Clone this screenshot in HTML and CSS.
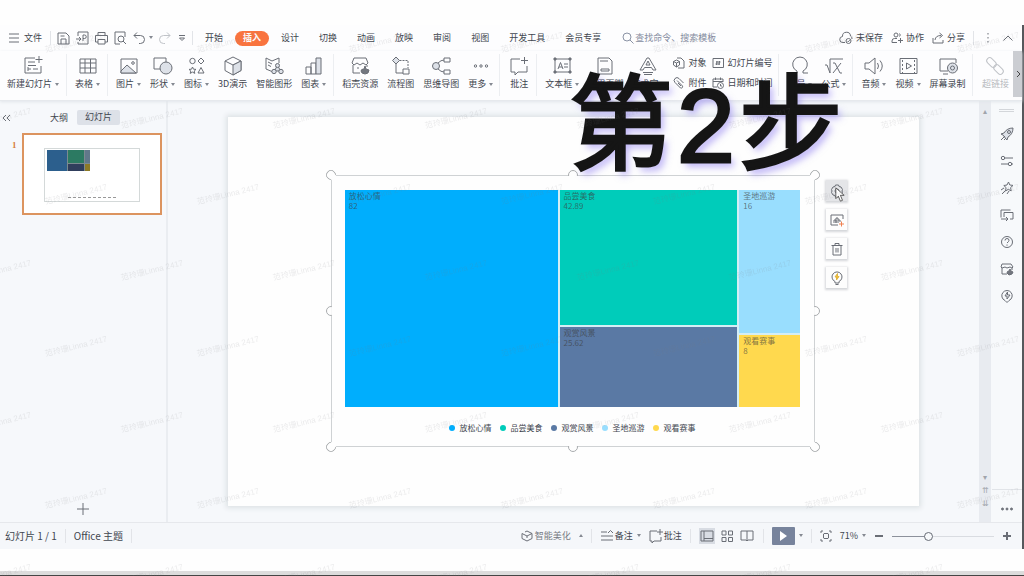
FILE: index.html
```html
<!DOCTYPE html>
<html lang="zh-CN">
<head>
<meta charset="utf-8">
<meta name="viewport" content="width=device-width, initial-scale=1">
<title>幻灯片</title>
<link rel="stylesheet" href="styles.css">
</head>
<body>
<div class="app">
  <header class="menubar">
    <div class="menu-left">
      <button class="item file"><svg class="ic s12" viewBox="0 0 12 12"><path d="M1 2h10M1 6h10M1 10h10"/></svg>文件</button>
      <i class="sep"></i>
      <div class="quick">
        <button class="item" aria-label="保存"><svg class="ic s14" viewBox="0 0 14 14"><path d="M2 2h8l3 3v8H2zM5 13V8h5v5M4.500 5h4"/></svg></button>
        <button class="item" aria-label="输出为PDF"><svg class="ic s14" viewBox="0 0 14 14"><path d="M3 5V1h10v12H3v-2M1 8h5M4 6l2 2-2 2M8 10V4h1.500a1.700 1.700 0 0 1 0 3.500H8"/></svg></button>
        <button class="item" aria-label="打印"><svg class="ic s14" viewBox="0 0 14 14"><path d="M4 4V1.500h7V4M4 11H1.500V4.500h12V11H11M4 8.500h7v4.500H4z"/></svg></button>
        <button class="item" aria-label="打印预览"><svg class="ic s14" viewBox="0 0 14 14"><path d="M7 13H2V1h10v5"/><circle cx="8" cy="8" r="3"/><path d="m10 10 3 3"/></svg></button>
        <button class="item" aria-label="撤销"><svg class="ic s14" viewBox="0 0 14 14"><path d="M5 1.500 2 4.500l3 3M2 4.500h6.500a4 4 0 0 1 0 8H7"/></svg><i class="caret"></i></button>
        <button class="item faint" aria-label="恢复"><svg class="ic s14" viewBox="0 0 14 14"><path d="m9 1.500 3 3-3 3M12 4.500H5.500a4 4 0 0 0 0 8H7"/></svg></button>
        <button class="item" aria-label="自定义"><svg class="ic s10" viewBox="0 0 10 10"><path d="M2 2.500h6M2.500 5h5L5 7.500z"/></svg></button>
      </div>
      <i class="sep"></i>
    </div>
    <nav class="tabs">
      <button>开始</button><button class="active">插入</button><button>设计</button><button>切换</button><button>动画</button><button>放映</button><button>审阅</button><button>视图</button><button>开发工具</button><button>会员专享</button>
    </nav>
    <label class="search"><svg class="ic s12" viewBox="0 0 12 12"><circle cx="5" cy="5" r="4"/><path d="m8 8 3.500 3.500"/></svg><input type="text" placeholder="查找命令、搜索模板" aria-label="查找命令、搜索模板"></label>
    <div class="menu-right">
      <button class="item"><svg class="ic s14" viewBox="0 0 14 14"><path d="M6 11.500H4A3 3 0 0 1 3.500 5.500a4 4 0 0 1 8-.5 3 3 0 0 1 1.500 3"/><circle cx="9.500" cy="10" r="2.500"/><path d="m8.500 10 .8.8 1.400-1.600"/></svg>未保存</button>
      <button class="item"><svg class="ic s12" viewBox="0 0 12 12"><circle cx="5" cy="3" r="2"/><path d="M1 10.500V9a2.500 2.500 0 0 1 2.500-2.500H6M1 10.500h5M9.500 6v5M7 8.500h5M8.500 1.500q1.500 1.500 0 3"/></svg>协作</button>
      <button class="item"><svg class="ic s12" viewBox="0 0 12 12"><path d="M1 6v5h10V8M3 8q.5-4.500 6-4.500M7.500 1l3 2.500-3 2.500"/></svg>分享</button>
      <i class="sep"></i>
      <button class="item" aria-label="更多"><svg class="ic s12" viewBox="0 0 12 12"><path class="fill" d="M5.500 1h1v1.500h-1zM5.500 5h1v1.500h-1zM5.500 9h1v1.500h-1z"/></svg></button>
      <button class="item" aria-label="收起"><svg class="ic s12" viewBox="0 0 12 12"><path d="M1.500 8.500 6 4l4.500 4.500"/></svg></button>
    </div>
  </header>

  <div class="ribbon">
    <div class="group wide">
      <button class="tool"><svg class="ic s22" viewBox="0 0 22 22"><path d="M13 3H3v15h16v-7M6 7h7M6 10.500h8M6 14h3M11 14h5M6 12v4M17 1v7M13.500 4.500h7"/></svg><span>新建幻灯片<i class="caret"></i></span></button>
    </div>
    <div class="group wide">
      <button class="tool"><svg class="ic s22" viewBox="0 0 22 22"><path d="M3 4h16v14H3zM3 8h16M3 13h16M8 4v14M13.500 4v14"/></svg><span>表格<i class="caret"></i></span></button>
    </div>
    <div class="group wide">
      <button class="tool"><svg class="ic s22" viewBox="0 0 22 22"><path d="M3 4h16v14H3z"/><path class="shade" d="m3 16 6-6 9 8H3z"/><circle cx="15" cy="8" r="1.300"/></svg><span>图片<i class="caret"></i></span></button>
      <button class="tool"><svg class="ic s22" viewBox="0 0 22 22"><path d="M2 3h12v11H2z"/><circle class="shade" cx="14" cy="13" r="6"/></svg><span>形状<i class="caret"></i></span></button>
      <button class="tool"><svg class="ic s22" viewBox="0 0 22 22"><circle cx="6.500" cy="6" r="2.700"/><path d="m15 3 3 3-3 3-3-3zM15 12.500l3 5.500h-6zM6.500 12l1 2.200 2.500.2-1.800 1.600.6 2.400-2.300-1.300-2.300 1.300.6-2.400L3 14.400l2.500-.2z"/></svg><span>图标<i class="caret"></i></span></button>
      <button class="tool"><svg class="ic s22" viewBox="0 0 22 22"><path d="m11 2 8 4v9.500L11 20l-8-4.500V6zM3 6l8 4 8-4"/><path class="shade" d="m11 10 8-4v9.500L11 20z"/></svg><span>3D演示</span></button>
      <button class="tool"><svg class="ic s22" viewBox="0 0 22 22"><path d="M10 17 3 14V3l6 3 7-3v5M5 7l4 2M5 10l3 1.500"/><path class="shade" d="m14.500 10-3 6h6z"/><circle class="shade" cx="14.500" cy="10.500" r="2"/><circle class="shade" cx="11" cy="16.500" r="2.200"/><circle class="shade" cx="18" cy="16.500" r="2.200"/></svg><span>智能图形</span></button>
      <button class="tool"><svg class="ic s22" viewBox="0 0 22 22"><path d="M3 12h5v7H3zM8 8h5v11H8z"/><path class="shade" d="M13 3h5v16h-5z"/></svg><span>图表<i class="caret"></i></span></button>
    </div>
    <div class="group">
      <button class="tool"><svg class="ic s22" viewBox="0 0 22 22"><path d="M4 10v8h7M5 3h12l2 5-2 2-3-2-3 2-3-2-3 2-2-2zM18 10v2M8 13h2"/><path class="dark" d="M12 16q0-2 3-2l1-3 1 3 3 1-1 3-3 1-3-1z"/></svg><span>稻壳资源</span></button>
      <button class="tool"><svg class="ic s22" viewBox="0 0 22 22"><path class="shade" d="m6 2 3.500 3.500L6 9 2.500 5.500z"/><path d="M6 9v9h7"/><path stroke-dasharray="2 1" d="M9.500 5.500H18V13"/><path d="M13 14h6v5h-6z"/></svg><span>流程图</span></button>
      <button class="tool"><svg class="ic s22" viewBox="0 0 22 22"><circle class="shade" cx="6" cy="11" r="3.500"/><path d="M8 8q3-3 6-3M8 14q3 3 6 3M14 3h6v4h-6zM14 15h6v4h-6z"/></svg><span>思维导图</span></button>
      <button class="tool"><svg class="ic s22" viewBox="0 0 22 22"><circle cx="5.500" cy="11" r="1.200"/><circle cx="11" cy="11" r="1.200"/><circle cx="16.500" cy="11" r="1.200"/></svg><span>更多<i class="caret"></i></span></button>
    </div>
    <div class="group">
      <button class="tool"><svg class="ic s22" viewBox="0 0 22 22"><path d="M12 4H3v13h4v3l3-3h9v-6M16.500 2v7M13 5.500h7"/></svg><span>批注</span></button>
    </div>
    <div class="group tight">
      <button class="tool"><svg class="ic s22" viewBox="0 0 22 22"><path d="M4 4h15v13H4zM7 14l2.500-6.500L12 14M8 12h3M13 9h4M13 12h4"/><path class="dark" d="M3 3h2v2H3zM18 3h2v2h-2zM3 16h2v2H3zM18 16h2v2h-2z"/></svg><span>文本框<i class="caret"></i></span></button>
      <button class="tool"><svg class="ic s22" viewBox="0 0 22 22"><path d="M4 3h11l3 3v13H4zM6 6h8M7 14h8v2H7z"/></svg><span>页眉页脚</span></button>
      <button class="tool"><svg class="ic s22" viewBox="0 0 22 22"><path d="m3 15 7-12h2l7 12h-3l-1.500-2.500h-7L6 15zM9 10l2-4 2 4zM6 17.500h10M7 19.500h8"/></svg><span>艺术字<i class="caret"></i></span></button>
      <div class="stack">
        <button class="item"><svg class="ic s12" viewBox="0 0 12 12"><path d="M4 1h4l3 3v7H5"/><path d="m3.500 3 3 1.500V8l-3 2-3-2V4.500zM.5 4.500l3 1.500 3-1.500M3.500 6v4"/></svg>对象</button>
        <button class="item"><svg class="ic s12" viewBox="0 0 12 12"><path d="M4 3.500 9.500 9A1.500 1.500 0 0 1 7.500 11L2 5.500A2.800 2.800 0 0 1 6 1.500L10.500 6M5 6l3 3"/></svg>附件</button>
      </div>
      <div class="stack">
        <button class="item"><svg class="ic s12" viewBox="0 0 12 12"><path d="M1 1.500h10.500v9H1zM5 4 4.500 8M7.500 4 7 8M4 5h4.500M3.500 7H8"/></svg>幻灯片编号</button>
        <button class="item"><svg class="ic s12" viewBox="0 0 12 12"><path d="M5 10H1V2h10v3M1 4.500h10M3.500.5V3M8.500.5V3"/><circle cx="8.500" cy="8.500" r="3"/><path d="M8.500 7v2H10"/></svg>日期和时间</button>
      </div>
    </div>
    <div class="group">
      <button class="tool"><svg class="ic s22" viewBox="0 0 22 22"><path d="M3 18h5v-2a7.300 7.300 0 1 1 6 0v2h5"/></svg><span>符号<i class="caret"></i></span></button>
      <button class="tool"><svg class="ic s22" viewBox="0 0 22 22"><path d="M2 10h2l3 8V4h13M10 8h2l5 10h2M18 8l-8 10"/></svg><span>公式<i class="caret"></i></span></button>
    </div>
    <div class="group">
      <button class="tool"><svg class="ic s22" viewBox="0 0 22 22"><path d="M2 8h4l6-5v16l-6-5H2zM14.500 8q2 3 0 6M17 5.500q4.500 5.500 0 11"/></svg><span>音频<i class="caret"></i></span></button>
      <button class="tool"><svg class="ic s22" viewBox="0 0 22 22"><path d="M3 3.500h17v15H3zM9.500 8v6l5-3z"/><path stroke-dasharray="2 2" d="M5.500 5v13M17.500 5v13"/></svg><span>视频<i class="caret"></i></span></button>
      <button class="tool"><svg class="ic s22" viewBox="0 0 22 22"><path d="M11 16H3V4h16v4M6 19h5"/><circle class="shade" cx="15.500" cy="13" r="5"/><circle cx="15.500" cy="13" r="2"/></svg><span>屏幕录制</span></button>
    </div>
    <div class="group last">
      <button class="tool faint"><svg class="ic s22" viewBox="0 0 22 22"><rect x="2" y="4.500" width="11" height="6" rx="3" transform="rotate(45 7.500 7.500)"/><rect x="9" y="11.500" width="11" height="6" rx="3" transform="rotate(45 14.500 14.500)"/></svg><span>超链接</span></button>
    </div>
    <button class="more" aria-label="向右滚动"><svg class="ic s10" viewBox="0 0 10 10"><path d="m4 2 3 3-3 3"/></svg></button>
  </div>

  <main class="work">
    <aside class="outline">
      <div class="outline-tabs">
        <button class="item" aria-label="收起"><svg class="ic s10" viewBox="0 0 10 10"><path d="M4 2 1 5l3 3M8 2 5 5l3 3"/></svg></button>
        <button class="pane-tab">大纲</button>
        <button class="pane-tab active">幻灯片</button>
      </div>
      <div class="slide-row">
        <b>1</b>
        <div class="thumb">
          <div class="mini">
            <div class="mini-map"><i class="m1"></i><i class="m2"></i><i class="m3"></i><i class="m4"></i><i class="m5"></i></div>
            <div class="mini-legend"></div>
          </div>
        </div>
      </div>
      <button class="add" aria-label="新建幻灯片"><svg class="ic s12" viewBox="0 0 12 12"><path d="M6 0v12M0 6h12"/></svg></button>
    </aside>

    <section class="canvas">
      <div class="slide">
        <div class="chart">
          <div class="treemap">
            <div class="col"><div class="cell blue">放松心情<br>82</div></div>
            <div class="col two"><div class="cell green">品尝美食<br>42.89</div><div class="cell slate">观赏风景<br>25.62</div></div>
            <div class="col three"><div class="cell sky">圣地巡游<br>16</div><div class="cell yellow">观看赛事<br>8</div></div>
          </div>
          <ul class="legend">
            <li><i class="blue"></i>放松心情</li><li><i class="green"></i>品尝美食</li><li><i class="slate"></i>观赏风景</li><li><i class="sky"></i>圣地巡游</li><li><i class="yellow"></i>观看赛事</li>
          </ul>
          <i class="handle tl"></i><i class="handle tr"></i><i class="handle bl"></i><i class="handle br"></i>
          <i class="handle t"></i><i class="handle b"></i><i class="handle l"></i><i class="handle r"></i>
          <div class="float-tools">
            <button class="hover" aria-label="图表设置"><svg class="ic s14" viewBox="0 0 14 14"><path d="m5.500 1 3 0 .5 1.500L11 3l1.500 2.500L12 7l.5 1.500L11 11l-2 .5-.5 1.500h-3L5 11.500 3 11 1.500 8.500 2 7l-.5-1.500L3 3l2-.5z"/><circle cx="7" cy="7" r="2"/></svg>
              <svg class="pointer" viewBox="0 0 12 18"><path d="M1 1v13l3-3 2.500 6 2.500-1-2.500-6H11z"/></svg></button>
            <button aria-label="图表元素"><svg class="ic s14" viewBox="0 0 14 14"><path d="M8 12H1V2h12v4M4 10V7h2v3M6 10V5h2v5M8 7h2v2"/><path class="orange" d="M11.500 8.500v5M9 11h5"/></svg></button>
            <button aria-label="删除"><svg class="ic s14" viewBox="0 0 14 14"><path d="M1.500 3.500h11M5 3V1.500h4V3M3 3.500V13h8V3.500M6 6v4.500M8 6v4.500"/></svg></button>
            <button aria-label="智能提示"><svg class="ic s14" viewBox="0 0 14 14"><path d="M5 10.500a5 5 0 1 1 4 0V12H5zM5.500 13.500h3"/><path class="spark" d="m7.500 2.500-2.500 3.500h1.500L6.500 9 9 5.500H7.500z"/></svg></button>
          </div>
        </div>
      </div>
    </section>

    <div class="scrollbar"><span>▴</span><div><span>▾</span><span>⇈</span><span>⇊</span></div></div>

    <aside class="sidebar">
      <i class="grip"></i>
      <button aria-label="新功能"><svg class="ic s14" viewBox="0 0 14 14"><path class="shade" d="M13 1Q7 1 4 6L1 7l2 1 3 4 1 1 1-3q5-3 5-9z"/><circle cx="9" cy="5" r="1.500"/><path d="m1 13 4-4M4 13l2-2"/></svg></button>
      <button aria-label="对象属性"><svg class="ic s14" viewBox="0 0 14 14"><circle cx="3" cy="4" r="1.700"/><path d="M5 4h8M1 10h7M12 10h1"/><circle cx="10" cy="10" r="1.700"/></svg></button>
      <button aria-label="动画"><svg class="ic s14" viewBox="0 0 14 14"><path d="m8.500 1 1.300 3 3.200.4-2.400 2.200.6 3.300-2.900-1.600L5.500 10l.6-3.400L3.800 4.500 7 4zM4 7l-3 2M5 10l-3 3M9 10l-2 3"/></svg></button>
      <button aria-label="切换"><svg class="ic s14" viewBox="0 0 14 14"><path d="M1 9.500V2h9.500M4 9V4.500h9V11h-3M1 11h7M6 9l2 2-2 2"/></svg></button>
      <button aria-label="帮助"><svg class="ic s14" viewBox="0 0 14 14"><circle cx="7" cy="7" r="5.500"/><path d="M5 5.500q0-2 2-2t2 1.800Q9 6.500 7 8M7 9.500v1.200"/></svg></button>
      <button aria-label="稻壳资源"><svg class="ic s14" viewBox="0 0 14 14"><path d="M2 6v6h5M2 2h9l2 3-1 1-2-1-3 1-2-1-3 1-1-1zM12 6v2"/><path class="dark" d="M7 11q0-2 2-2l1-2 1 2 2 1-1 2-3 1z"/></svg></button>
      <button aria-label="智能助手"><svg class="ic s14" viewBox="0 0 14 14"><path d="M5 11.500a5.200 5.200 0 1 1 4 0L7 13.500zM7.500 3 5 7h2v3l3-4H7.500z"/></svg></button>
      <button class="dots" aria-label="更多"><svg class="ic s14" viewBox="0 0 14 14"><circle class="dark" cx="2.500" cy="7" r="1"/><circle class="dark" cx="7" cy="7" r="1"/><circle class="dark" cx="11.500" cy="7" r="1"/></svg></button>
    </aside>
  </main>

  <footer class="status">
    <span class="note">幻灯片 1 / 1</span><i class="sep"></i><span class="note">Office 主题</span><i class="sep"></i>
    <div class="status-right">
      <button class="item soft"><svg class="ic s12" viewBox="0 0 12 12"><path d="m4 2 2-1 5 2.500v5L6 11 1 8.500V3.500L6 6l5-2.500M6 6v2"/></svg>智能美化<i class="caret up"></i></button>
      <i class="sep"></i>
      <button class="item"><svg class="ic s14" viewBox="0 0 14 14"><path d="M1 3h6M1 7h12M1 11h12M8 4l2.500-2.500L13 4"/></svg>备注<i class="caret"></i></button>
      <button class="item"><svg class="ic s14" viewBox="0 0 14 14"><path d="M8 2H1v10h2v2l2-2h7V8M11 0v6M8 3h6"/></svg>批注</button>
      <i class="sep"></i>
      <button class="item view on" aria-label="普通视图"><svg class="ic s14" viewBox="0 0 14 14"><path d="M1 2h12v10H1zM4 2v10M4 9.500h9"/></svg></button>
      <button class="item view" aria-label="幻灯片浏览"><svg class="ic s14" viewBox="0 0 14 14"><path d="M2 2h4v4H2zM8.500 2h4v4h-4zM2 8.500h4v4H2zM8.500 8.500h4v4h-4z"/></svg></button>
      <button class="item view" aria-label="阅读视图"><svg class="ic s14" viewBox="0 0 14 14"><path d="M1 2h12v9H8l-1 1-1-1H1zM7 2v9"/></svg></button>
      <i class="sep"></i>
      <button class="play" aria-label="放映"><svg viewBox="0 0 10 10"><path d="M2 0v10l7-5z"/></svg></button><i class="caret after-play"></i>
      <i class="sep"></i>
      <button class="item" aria-label="适应窗口"><svg class="ic s12" viewBox="0 0 12 12"><path d="M1 3V1h2M9 1h2v2M11 9v2H9M3 11H1V9M4 3.500h4l.5.5v4l-.5.5H4L3.500 8V4z"/></svg></button>
      <button class="item">71%<i class="caret"></i></button>
      <button class="item zoom" aria-label="缩小"><svg class="ic s10" viewBox="0 0 10 10"><path d="M1 5h8"/></svg></button>
      <input class="slider" type="range" min="0" max="100" value="34" aria-label="缩放">
      <button class="item zoom" aria-label="放大"><svg class="ic s10" viewBox="0 0 10 10"><path d="M1 5h8M5 1v8"/></svg></button>
    </div>
  </footer>
</div>
<div class="bottom-strip"></div>
<div class="caption">第<span>2</span>步</div>
<svg class="watermark" aria-hidden="true">
  <defs>
    <pattern id="wm" width="152" height="152" patternUnits="userSpaceOnUse">
      <g text-anchor="middle">
        <text x="76" y="45" transform="rotate(-14 76 42)">范玲珊Linna 2417</text>
        <text x="0" y="121" transform="rotate(-14 0 118)">范玲珊Linna 2417</text>
        <text x="152" y="121" transform="rotate(-14 152 118)">范玲珊Linna 2417</text>
      </g>
    </pattern>
  </defs>
  <rect width="100%" height="100%" fill="url(#wm)"/>
</svg>
</body>
</html>
```
FILE: styles.css
```css
* { box-sizing: border-box; }
body {
  margin: 0;
  min-height: 100vh;
  display: flex;
  flex-direction: column;
  position: relative;
  overflow: hidden;
  background: #fefefe;
  color: #41464f;
  font: 9px/12px "Noto Sans CJK SC", sans-serif;
}
button { border: 0; padding: 0; background: none; color: inherit; font: inherit; white-space: nowrap; }
i { font-style: normal; }

.ic { display: block; flex: none; fill: none; stroke: #6a6e76; stroke-width: 1; overflow: visible; }
.s10 { width: 10px; height: 10px; }
.s12 { width: 12px; height: 12px; }
.s14 { width: 14px; height: 14px; }
.s22 { width: 22px; height: 22px; }
.ic .shade { fill: #dde1e8; }
.ic .dark { fill: #73777f; }
.ic .fill { fill: #6a6e76; stroke: none; }
.ic .orange { stroke: #f08050; }
.ic .spark { fill: #f4c030; stroke: #e0b440; }
.faint { color: #b8bbc0; }
.faint .ic { stroke: #c0c3c8; }
.item { display: flex; align-items: center; gap: 3px; }
.sep { flex: none; width: 1px; height: 14px; background: #e2e4e8; }
.caret {
  display: inline-block;
  flex: none;
  margin: 0 0 2px 3px;
  border: 2px solid transparent;
  border-top: 3px solid #858992;
  border-bottom: 0;
}
.caret.up { border-top: 0; border-bottom: 3px solid #858992; }

.app {
  flex: 1;
  display: flex;
  flex-direction: column;
  margin-top: 25px;
  border-right: 2px solid #55585c;
}

.menubar { display: flex; align-items: center; height: 26px; background: #fdfdfe; }
.menu-left { display: flex; align-items: center; gap: 5px; padding-left: 8px; }
.file { gap: 4px; padding-right: 3px; }
.quick { display: flex; align-items: center; gap: 5px; }
.quick .caret { margin-left: 0; }
.tabs { display: flex; align-items: center; gap: 20px; margin-left: 12px; }
.tabs .active {
  margin: 0 -8px;
  padding: 1px 8px 2px;
  border-radius: 8px;
  background: #f9743f;
  color: #fff;
  font-weight: 700;
}
.search { display: flex; align-items: center; gap: 1px; margin-left: 21px; }
.search .ic { stroke: #8b93a5; }
.search input {
  width: 92px;
  padding: 0;
  border: 0;
  background: none;
  font: inherit;
}
.search input::placeholder { color: #858ca0; opacity: 1; }
.menu-right { display: flex; align-items: center; gap: 8px; margin-left: auto; padding-right: 8px; }

.ribbon {
  display: flex;
  height: 50px;
  background: #fdfdfe;
  border-bottom: 1px solid #e6e9ed;
  box-shadow: 0 1px 3px #e1e5ea;
  position: relative;
}
.group { display: flex; gap: 9px; padding: 4px 7px 0 8px; position: relative; }
.group:first-child { padding-left: 7px; }
.group.wide { padding-right: 8px; }
.group.tight { gap: 8px; }
.group:not(.last)::after { content: ""; width: 1px; height: 42px; background: #eceef1; position: absolute; right: 0; top: 3px; }
.tool { display: flex; flex-direction: column; align-items: center; gap: 1px; height: 36px; }
.tool span { display: flex; align-items: center; }
.tool .caret { margin-bottom: 0; }
.stack { display: flex; flex-direction: column; gap: 8px; padding-top: 2px; }
.stack + .stack { margin-left: -2px; }
.last { margin-left: auto; padding-right: 4px; }
.more { width: 9px; height: 46px; background: #cbcdd2; display: grid; place-items: center; }
.more .ic { stroke: #444; }

.work { flex: 1; display: flex; background: #f6f8fb; }
.outline { width: 168px; display: flex; flex-direction: column; border-right: 2px solid #eaedf1; padding-top: 9px; }
.outline-tabs { display: flex; align-items: center; gap: 9px; padding-left: 2px; }
.outline-tabs .item { margin-right: 29px; }
.pane-tab.active { background: #dde1e8; border-radius: 2px; padding: 1px 8px 2px; }
.slide-row { display: flex; margin: 8px 4px 0 12px; }
.slide-row b { width: 10px; padding-top: 6px; color: #d6813f; font-family: "Liberation Serif", serif; }
.thumb { flex: 1; height: 82px; border: 2px solid #dc945f; background: #fff; padding: 13px 20px 11px; }
.mini { height: 54px; border: 1px solid #d4d9d9; padding: 1px 2px; display: flex; flex-direction: column; justify-content: space-between; }
.mini-map { width: 43px; height: 21px; display: grid; grid-template: 13px 7px / 20px 16px 5px; gap: 1px; background: #7b8a90; }
.m1 { grid-row: span 2; background: #2c5f8d; }
.m2 { background: #2c7a62; }
.m3 { background: #61788a; }
.m4 { background: #303e5c; }
.m5 { background: #8d7a27; }
.mini-legend { width: 48px; align-self: center; height: 0; margin-bottom: 2px; border-top: 1px dashed #999; }
.add { margin: auto 0 7px; align-self: center; }

.canvas { flex: 1; min-width: 0; padding: 16px 60px; display: flex; }
.slide {
  flex: 1;
  display: grid;
  grid-template: 58fr 272fr 59fr / 103fr 485fr 104fr;
  background: #fefefe;
  box-shadow: 0 0 5px 2px #dde2e5;
}
.chart {
  grid-area: 2 / 2;
  position: relative;
  display: flex;
  flex-direction: column;
  padding: 14px 14px 12px 13px;
  border: 1px solid #cfd2d4;
}
.treemap { flex: 1; display: grid; grid-template-columns: 213fr 178fr 61fr; gap: 2px; background: #d4eef5; }
.col { display: grid; gap: 2px; }
.two { grid-template-rows: 135fr 80fr; }
.three { grid-template-rows: 143fr 72fr; }
.cell { padding: 1px 4px; font-size: 8px; line-height: 10px; color: rgb(60 60 60 / .65); }
.blue { background: #00aefd; }
.green { background: #00ccba; }
.slate { background: #5a79a4; }
.sky { background: #99defe; }
.yellow { background: #ffd94e; }
.legend { display: flex; justify-content: center; gap: 9px; margin: 15px 0 0; padding: 0; list-style: none; font-size: 8px; }
.legend li { display: flex; align-items: center; gap: 4px; }
.legend i { width: 6px; height: 6px; border-radius: 50%; }

.handle { position: absolute; width: 10px; height: 10px; border: 1px solid #a9acae; border-radius: 50%; background: #fefefe; }
.tl, .tr, .bl, .br { border-right-color: transparent; }
.tl { left: -6px; top: -6px; transform: rotate(45deg); }
.tr { right: -6px; top: -6px; transform: rotate(135deg); }
.bl { left: -6px; bottom: -6px; transform: rotate(-45deg); }
.br { right: -6px; bottom: -6px; transform: rotate(-135deg); }
.t, .b { left: calc(50% - 5px); }
.l, .r { top: calc(50% - 5px); }
.t { top: -6px; clip-path: inset(0 0 40% 0); }
.b { bottom: -6px; clip-path: inset(40% 0 0 0); }
.l { left: -6px; clip-path: inset(0 40% 0 0); }
.r { right: -6px; clip-path: inset(0 0 0 40%); }

.float-tools { position: absolute; left: calc(100% + 12px); top: 4px; display: flex; flex-direction: column; gap: 8px; }
.float-tools button { position: relative; width: 21px; height: 21px; display: grid; place-items: center; background: #fdfdfd; box-shadow: 0 1px 2px 1px #d5d7da; }
.float-tools .hover { background: #e4e5e8; }
.pointer { position: absolute; left: 9px; top: 7px; width: 10px; height: 15px; fill: #fff; stroke: #444; }

.scrollbar { width: 12px; display: flex; flex-direction: column; justify-content: space-between; padding: 4px 0 13px; background: #e8ebf0; color: #a0a4ab; text-align: center; font-size: 8px; }
.scrollbar div { display: grid; gap: 1px; }
.sidebar { width: 31px; display: flex; flex-direction: column; align-items: center; gap: 13px; padding-top: 8px; background: #f7f9fb; }
.grip { width: 15px; height: 3px; border: solid #d3d6da; border-width: 1px 0; margin-bottom: 2px; }
.dots { margin-top: auto; padding: 12px 8px 6px; border-top: 1px solid #e1e4e8; }

.status { display: flex; align-items: center; gap: 8px; height: 27px; padding-left: 5px; background: #f5f7fa; border-top: 1px solid #e6e8ec; }
.note { font-size: 10px; }
.status-right { display: flex; align-items: center; gap: 8px; margin-left: auto; padding-right: 10px; }
.status-right .item { gap: 1px; }
.soft { color: #777b83; }
.status-right .soft { gap: 2px; }
.soft .caret { margin-left: 6px; }
.view { padding: 1px; margin-right: -4px; height: 16px; }
.view.on { background: #d8dce3; }
.view + .sep { margin-left: 4px; }
.play { width: 23px; height: 18px; background: #77839c; border-radius: 1px; display: grid; place-items: center; }
.play svg { width: 10px; height: 10px; fill: #fff; }
.after-play { margin-left: -4px; }
.zoom .ic { stroke-width: 2; }
.slider { appearance: none; width: 102px; height: 12px; margin: 0; background: linear-gradient(to right, #8c919b 34%, #d9dce1 34%) center / 100% 1px no-repeat; }
.slider::-webkit-slider-thumb { appearance: none; width: 9px; height: 9px; border: 1px solid #666b75; border-radius: 50%; background: #f7f9fb; }

.bottom-strip { height: 27px; background: linear-gradient(#fefefe 22px, #dcdcdc 22px); border-bottom: 1px solid #454545; }

.caption {
  position: absolute;
  left: 569px;
  top: 65px;
  color: #151515;
  font-size: 104px;
  line-height: 104px;
  font-weight: 400;
  -webkit-text-stroke: 3px #151515;
  text-shadow: 4px 5px 7px rgb(125 105 240 / .5);
  white-space: nowrap;
  pointer-events: none;
}
.caption span { margin: 0 4px; font-family: "Liberation Sans", sans-serif; }
.watermark { position: absolute; inset: 0; width: 100%; height: 100%; pointer-events: none; fill: rgb(110 115 120 / .14); font-family: "Liberation Sans", "Noto Sans CJK SC", sans-serif; font-size: 8px; }
```
